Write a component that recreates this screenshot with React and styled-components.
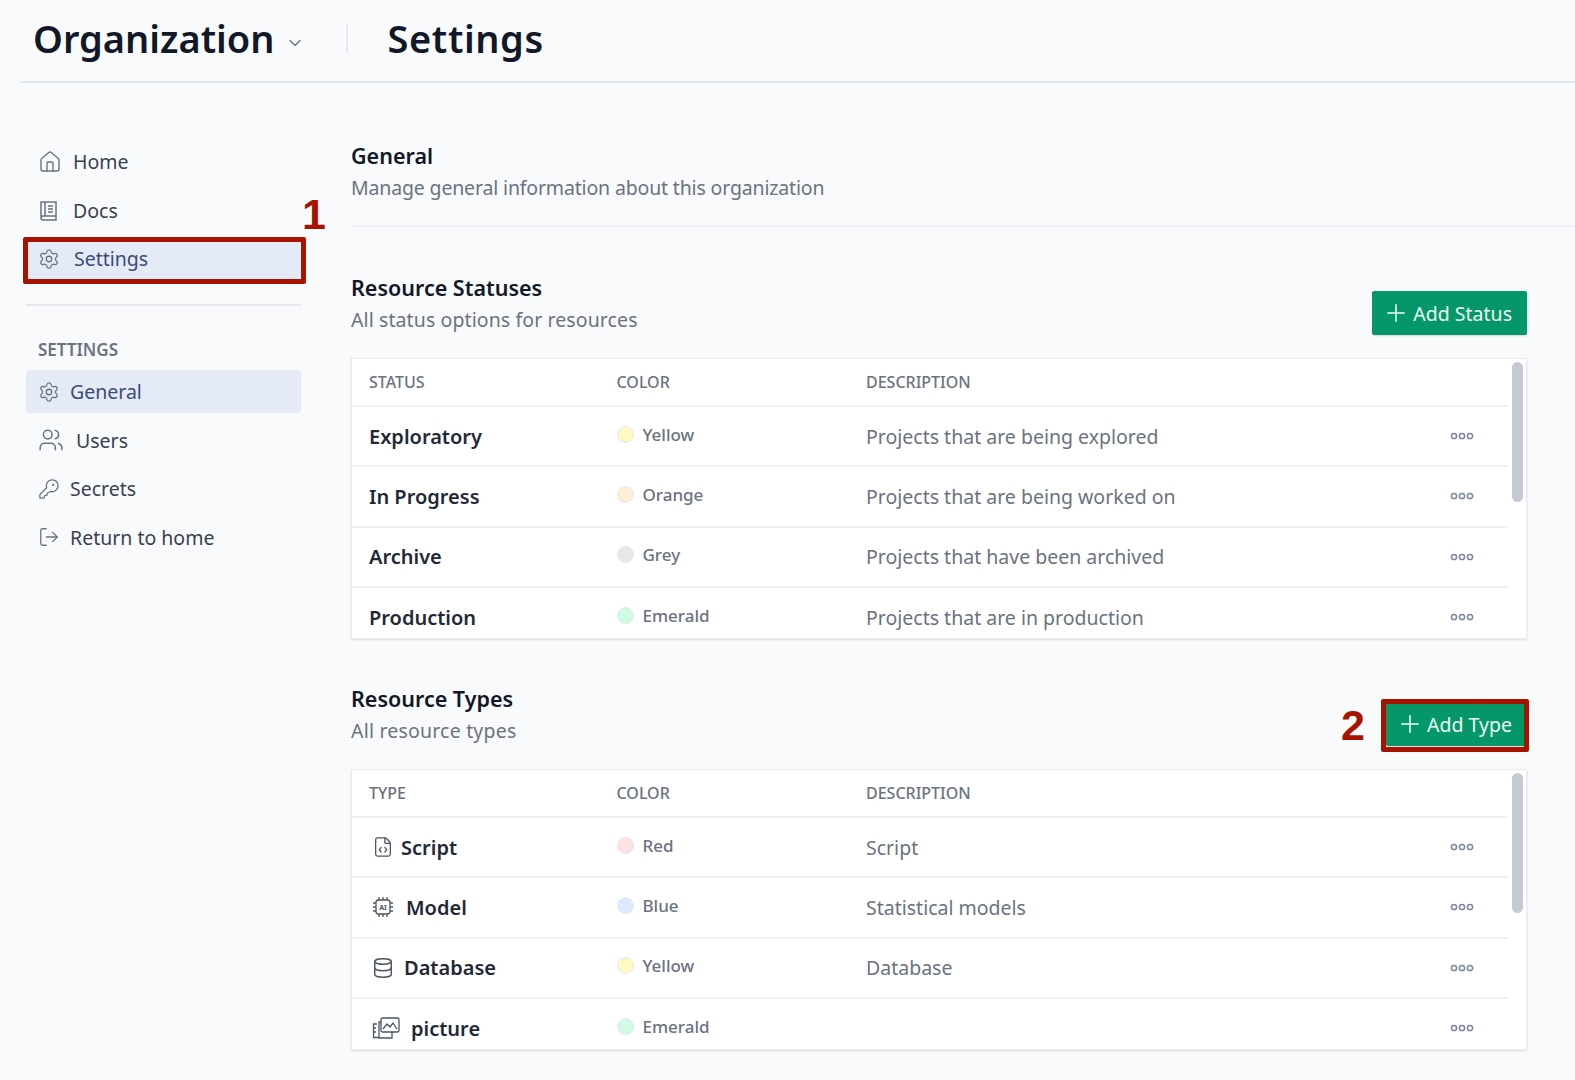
import React from 'react'
import styled, { createGlobalStyle } from 'styled-components'
import { House, Settings, Users, KeyRound, LogOut, ChevronDown, Plus, Database, FileCode } from 'lucide-react'

const GlobalStyle = createGlobalStyle`
  html, body { margin: 0; padding: 0; background: #f9fafc; }
  body { font-family: "Noto Sans", "Open Sans", sans-serif; color: #111827; }
`

const Page = styled.div`
  position: relative;
  width: 1575px;
  height: 1080px;
  overflow: hidden;
  padding-left: 20px;
  box-sizing: border-box;
`

const Header = styled.header`
  display: flex;
  align-items: center;
  height: 75px;
  padding: 0 0 6px 13px;
  border-bottom: 2px solid #e3e6ea;
  box-sizing: content-box;
`

const HeaderTitle = styled.h1`
  margin: 0;
  font-size: 38px;
  font-weight: 600;
  letter-spacing: ${p => p.$spacing || 0}px;
  line-height: 70px;
  color: #111827;
`

const HeaderChevron = styled(ChevronDown)`
  margin: 10px 0 0 10px;
  color: #6b7280;
`

const HeaderDivider = styled.div`
  width: 2px;
  height: 30px;
  background: #e8eaee;
  margin: 0 40px 0 41px;
`

const Body = styled.div`
  display: flex;
`

const Sidebar = styled.nav`
  width: 275px;
  margin-left: 6px;
  padding-top: 57px;
  flex: none;
`

const NavItem = styled.div`
  display: flex;
  align-items: center;
  height: 43px;
  margin-bottom: 5.5px;
  padding-left: 12px;
  gap: ${p => p.$gap || 12}px;
  border-radius: 4px;
  font-size: 19.5px;
  color: ${p => (p.$active ? '#3b4a78' : '#374151')};
  background: ${p => (p.$active ? '#e5ebf6' : 'transparent')};
  svg { color: #6b7280; flex: none; }
`

const SideDivider = styled.div`
  height: 2px;
  background: #e5e7eb;
  margin-top: 24px;
`

const SideLabel = styled.div`
  margin: 33px 0 9px 12px;
  font-size: 17px;
  line-height: 22px;
  font-weight: 600;
  color: #6b7280;
`

const Main = styled.main`
  width: 1176px;
  margin-left: 50px;
  padding-top: 57px;
  flex: none;
`

const GeneralBlock = styled.div`
  width: 1224px;
  padding-bottom: 22px;
  border-bottom: 2px solid #eef0f3;
  margin-bottom: 45px;
`

const SectionTitle = styled.h2`
  margin: 0;
  font-size: 21.5px;
  line-height: 32px;
  font-weight: 600;
  color: #111827;
`

const SectionDesc = styled.p`
  margin: 1px 0 0;
  font-size: 19.5px;
  line-height: 30px;
  letter-spacing: ${p => p.$spacing || 0}px;
  color: #6b7280;
`

const SectionHead = styled.div`
  display: flex;
  justify-content: space-between;
  align-items: flex-start;
  height: 86px;
`

const AddButton = styled.button`
  display: flex;
  align-items: center;
  gap: 3px;
  height: 44px;
  margin-top: 19px;
  padding: 0 15px 0 10px;
  border: 0;
  border-radius: 2px;
  background: #059669;
  color: #eafff5;
  font: inherit;
  font-size: 19.5px;
  box-shadow: 0 1px 2px rgba(0, 0, 0, 0.15);
`

const Section = styled.section`
  margin-bottom: 44px;
`

const TableCard = styled.div`
  display: flex;
  height: 281px;
  overflow: hidden;
  background: #fff;
  border: 1px solid #e8eaee;
  box-shadow: 0 1px 2px rgba(0, 0, 0, 0.12);
  box-sizing: border-box;
`

const Rows = styled.div`
  flex: 1;
  min-width: 0;
`

const Gutter = styled.div`
  width: 18px;
  flex: none;
  padding: 3px 3px 0 4px;
  box-sizing: border-box;
`

const Thumb = styled.div`
  height: 140px;
  border-radius: 6px;
  background: #c4c9d4;
`

const RowGrid = styled.div`
  display: grid;
  grid-template-columns: 247.5px 249.5px 1fr 58px;
  align-items: center;
  padding-left: 17px;
  box-sizing: border-box;
`

const HeadRow = styled(RowGrid)`
  height: 48px;
  border-bottom: 2px solid #f0f1f4;
  font-size: 16px;
  font-weight: 500;
  color: #6b7280;
`

const DataRow = styled(RowGrid)`
  height: 60.3px;
  border-bottom: 2px solid #f0f1f4;
`

const NameCell = styled.div`
  display: flex;
  align-items: center;
  gap: ${p => p.$gap || 8}px;
  font-size: 20px;
  font-weight: 600;
  color: #1f2937;
  svg { color: #4b5563; flex: none; margin-left: 3px; }
`

const ColorCell = styled.div`
  display: flex;
  align-items: center;
  gap: 9px;
  margin-top: -4px;
  font-size: 17px;
  font-weight: 500;
  color: #6b7280;
`

const Dot = styled.span`
  width: 17px;
  height: 17px;
  border-radius: 50%;
  background: ${p => p.$color};
  border: 1px solid #e5e7eb;
  box-sizing: border-box;
`

const DescCell = styled.div`
  font-size: 19.5px;
  color: #6b7280;
`

const ActionCell = styled.div`
  display: flex;
  justify-content: flex-start;
  color: #7c86a0;
`

// red annotation marks lying over the screenshot
const Callout = styled.div`
  position: absolute;
  left: ${p => p.$x}px;
  top: ${p => p.$y}px;
  width: ${p => p.$w}px;
  height: ${p => p.$h}px;
  border: 5px solid #a61400;
  border-radius: 2px;
  box-sizing: border-box;
`

const CalloutNumber = styled.div`
  position: absolute;
  left: ${p => p.$x}px;
  top: ${p => p.$y}px;
  font-family: "Liberation Sans", Arial, sans-serif;
  font-size: 43px;
  line-height: 50px;
  font-weight: 700;
  color: #a61400;
`

const DocsIcon = () => (
  <svg width="22" height="22" viewBox="0 0 22 22" fill="none" stroke="currentColor" strokeWidth="1.5">
    <path d="M3 18V3h15v14H5a2 2 0 0 0-2 2 2 2 0 0 0 2 2h13v-4" />
    <path d="M7 3v14M10 7h5M10 10h5M10 13h5" />
  </svg>
)

const ModelIcon = () => (
  <svg width="22" height="22" viewBox="0 0 22 22" fill="none" stroke="currentColor" strokeWidth="1.3">
    <rect x="4" y="4" width="14" height="14" rx="2.5" />
    <path d="M7 1v3M11 1v3M15 1v3M7 18v3M11 18v3M15 18v3M1 7h3M1 11h3M1 15h3M18 7h3M18 11h3M18 15h3" />
    <text x="11" y="14" fontSize="7" fontWeight="700" fill="currentColor" stroke="none" textAnchor="middle">AI</text>
  </svg>
)

const PictureIcon = () => (
  <svg width="28" height="22" viewBox="0 0 28 22" fill="none" stroke="currentColor" strokeWidth="1.3">
    <rect x="9" y="1" width="18" height="14" rx="1.5" />
    <path d="M11 12l4-5 3 3 3-4 4 6" />
    <path d="M9 5H7v16h13v-6" />
    <path d="M5 7H1.5v13.5H7M4 11H1.5M4 15H1.5" />
  </svg>
)

const Dots = () => (
  <svg width="24" height="8" viewBox="0 0 24 8" fill="none" stroke="currentColor" strokeWidth="1.5">
    <circle cx="4" cy="4" r="2.6" />
    <circle cx="12" cy="4" r="2.6" />
    <circle cx="20" cy="4" r="2.6" />
  </svg>
)

const COLORS = {
  Yellow: '#fef9c3',
  Orange: '#ffedd5',
  Grey: '#e5e7eb',
  Emerald: '#d1fae5',
  Red: '#fee2e2',
  Blue: '#dbeafe',
}

const statuses = [
  { name: 'Exploratory', color: 'Yellow', desc: 'Projects that are being explored' },
  { name: 'In Progress', color: 'Orange', desc: 'Projects that are being worked on' },
  { name: 'Archive', color: 'Grey', desc: 'Projects that have been archived' },
  { name: 'Production', color: 'Emerald', desc: 'Projects that are in production' },
]

const types = [
  { name: 'Script', color: 'Red', desc: 'Script', icon: <FileCode size={22} strokeWidth={1.4} />, gap: 7 },
  { name: 'Model', color: 'Blue', desc: 'Statistical models', icon: <ModelIcon />, gap: 12 },
  { name: 'Database', color: 'Yellow', desc: 'Database', icon: <Database size={22} strokeWidth={1.6} />, gap: 10 },
  { name: 'picture', color: 'Emerald', desc: '', icon: <PictureIcon />, gap: 11 },
]

function Table({ first, rows }) {
  return (
    <TableCard>
      <Rows>
        <HeadRow>
          <div>{first}</div>
          <div>COLOR</div>
          <div>DESCRIPTION</div>
          <div />
        </HeadRow>
        {rows.map(r => (
          <DataRow key={r.name}>
            <NameCell $gap={r.gap}>
              {r.icon}
              {r.name}
            </NameCell>
            <ColorCell>
              <Dot $color={COLORS[r.color]} />
              {r.color}
            </ColorCell>
            <DescCell>{r.desc}</DescCell>
            <ActionCell>
              <Dots />
            </ActionCell>
          </DataRow>
        ))}
      </Rows>
      <Gutter>
        <Thumb />
      </Gutter>
    </TableCard>
  )
}

export default function App() {
  return (
    <Page>
      <GlobalStyle />
      <Header>
        <HeaderTitle>Organization</HeaderTitle>
        <HeaderChevron size={20} strokeWidth={1.6} />
        <HeaderDivider />
        <HeaderTitle $spacing={0.6}>Settings</HeaderTitle>
      </Header>
      <Body>
        <Sidebar>
          <NavItem $gap={11}>
            <House size={24} strokeWidth={1.4} />
            Home
          </NavItem>
          <NavItem $gap={13}>
            <DocsIcon />
            Docs
          </NavItem>
          <NavItem $active $gap={14}>
            <Settings size={22} strokeWidth={1.4} />
            Settings
          </NavItem>
          <SideDivider />
          <SideLabel>SETTINGS</SideLabel>
          <NavItem $active $gap={10}>
            <Settings size={22} strokeWidth={1.4} />
            General
          </NavItem>
          <NavItem $gap={12}>
            <Users size={26} strokeWidth={1.4} />
            Users
          </NavItem>
          <NavItem $gap={10}>
            <KeyRound size={22} strokeWidth={1.4} />
            Secrets
          </NavItem>
          <NavItem $gap={10}>
            <LogOut size={22} strokeWidth={1.4} />
            Return to home
          </NavItem>
        </Sidebar>
        <Main>
          <GeneralBlock>
            <SectionTitle>General</SectionTitle>
            <SectionDesc $spacing={-0.16}>Manage general information about this organization</SectionDesc>
          </GeneralBlock>
          <Section>
            <SectionHead>
              <div>
                <SectionTitle>Resource Statuses</SectionTitle>
                <SectionDesc $spacing={0.1}>All status options for resources</SectionDesc>
              </div>
              <AddButton>
                <Plus size={28} strokeWidth={1.3} />
                Add Status
              </AddButton>
            </SectionHead>
            <Table first="STATUS" rows={statuses} />
          </Section>
          <Section>
            <SectionHead>
              <div>
                <SectionTitle>Resource Types</SectionTitle>
                <SectionDesc $spacing={0.2}>All resource types</SectionDesc>
              </div>
              <AddButton>
                <Plus size={28} strokeWidth={1.3} />
                Add Type
              </AddButton>
            </SectionHead>
            <Table first="TYPE" rows={types} />
          </Section>
        </Main>
      </Body>
      <Callout $x={23} $y={237} $w={283} $h={47} />
      <CalloutNumber $x={302} $y={189}>1</CalloutNumber>
      <Callout $x={1381} $y={699} $w={148} $h={53} />
      <CalloutNumber $x={1341} $y={700}>2</CalloutNumber>
    </Page>
  )
}
